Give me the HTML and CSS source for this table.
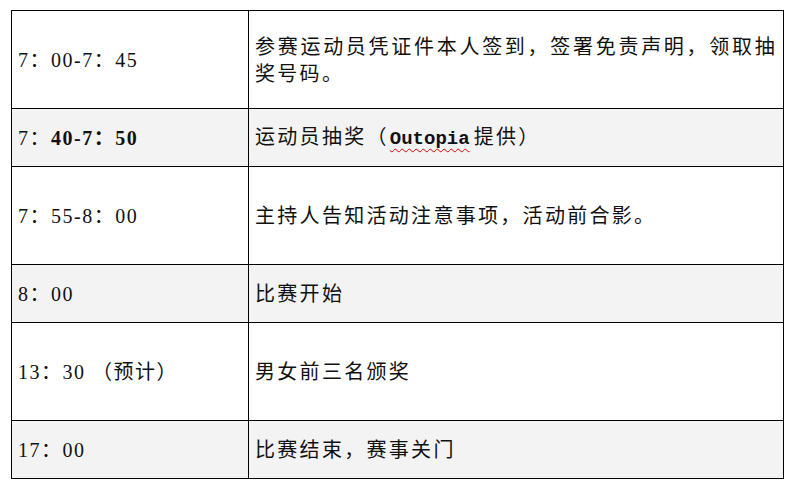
FILE: index.html
```html
<!DOCTYPE html>
<html lang="zh-CN">
<head>
<meta charset="utf-8">
<title>赛程安排</title>
<link rel="stylesheet" href="styles.css">
</head>
<body>
<table class="schedule">
  <colgroup><col class="col-time"><col class="col-desc"></colgroup>
  <tr class="row tall">
    <td class="time">7：00-7：45</td>
    <td class="desc">参赛运动员凭证件本人签到，签署免责声明，领取抽奖号码。</td>
  </tr>
  <tr class="row short shaded">
    <td class="time">7：<b class="bold">40-7：50</b></td>
    <td class="desc">运动员抽奖（<span class="brand">Outopia</span>提供）</td>
  </tr>
  <tr class="row tall">
    <td class="time">7：55-8：00</td>
    <td class="desc">主持人告知活动注意事项，活动前合影。</td>
  </tr>
  <tr class="row short shaded">
    <td class="time">8：00</td>
    <td class="desc">比赛开始</td>
  </tr>
  <tr class="row tall">
    <td class="time">13：30 （预计）</td>
    <td class="desc">男女前三名颁奖</td>
  </tr>
  <tr class="row short shaded">
    <td class="time">17：00</td>
    <td class="desc">比赛结束，赛事关门</td>
  </tr>
</table>
</body>
</html>
```
FILE: styles.css
```css
html, body {
  margin: 0;
  padding: 0;
  background: #ffffff;
}
body {
  padding: 10px 0 0 11px;
  font-family: "Liberation Serif", "Noto Sans CJK SC", serif;
  color: #111111;
}
.schedule {
  border-collapse: collapse;
  width: 772px;
  table-layout: fixed;
}
.col-time { width: 237px; }
.col-desc { width: 535px; }
.schedule td {
  border: 1px solid #000;
  vertical-align: middle;
  font-size: 20px;
  line-height: 27px;
  letter-spacing: 1.5px;
  padding: 2px 6px 0 6px;
  font-weight: 400;
}
.schedule td.desc {
  padding-left: 6px;
  letter-spacing: 2.3px;
  text-align: justify;
}
.tall { height: 98px; }
.short { height: 58px; }
.shaded td { background: #f3f3f3; }
.bold { font-weight: 700; }
.brand {
  font-family: "Liberation Mono", monospace;
  font-weight: 700;
  font-size: 19px;
  letter-spacing: 0;
  margin: 0 4px 0 1px;
  text-decoration: underline wavy #e00000;
  text-decoration-thickness: 1px;
  text-underline-offset: 4px;
}
```
